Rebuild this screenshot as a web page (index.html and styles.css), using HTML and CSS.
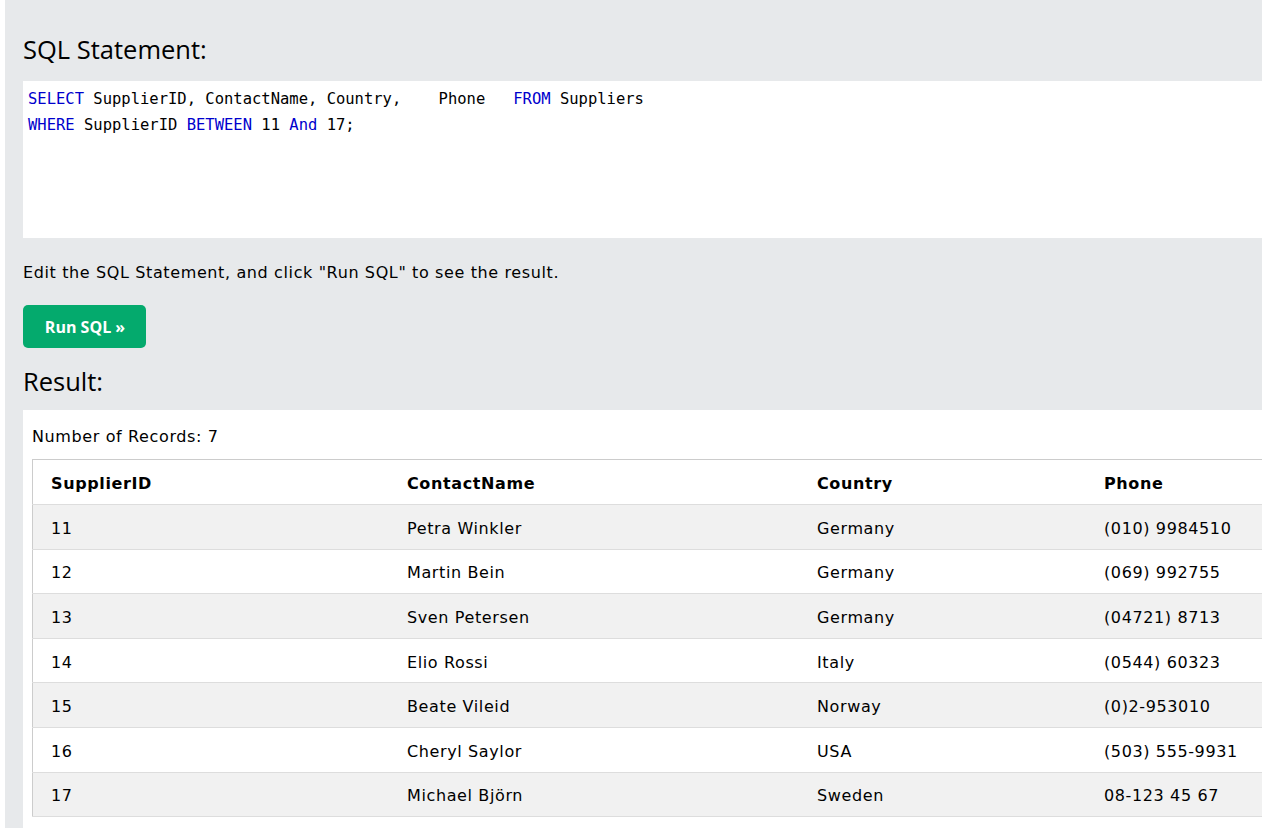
FILE: index.html
```html
<!DOCTYPE html>
<html>
<head>
<meta charset="utf-8">
<link rel="stylesheet" href="styles.css">
</head>
<body>
<div class="page">
  <h2 class="heading heading-sql">SQL Statement:</h2>
  <div class="code"><div class="code-line"><span class="kw">SELECT</span> SupplierID, ContactName, Country,    Phone   <span class="kw">FROM</span> Suppliers</div><div class="code-line"><span class="kw">WHERE</span> SupplierID <span class="kw">BETWEEN</span> 11 <span class="kw">And</span> 17;</div></div>
  <p class="hint">Edit the SQL Statement, and click "Run SQL" to see the result.</p>
  <button class="run-btn">Run SQL »</button>
  <h2 class="heading heading-result">Result:</h2>
  <div class="result">
    <div class="count">Number of Records: 7</div>
    <table class="grid">
      <thead>
        <tr><th class="c1">SupplierID</th><th class="c2">ContactName</th><th class="c3">Country</th><th class="c4">Phone</th></tr>
      </thead>
      <tbody>
        <tr><td>11</td><td>Petra Winkler</td><td>Germany</td><td>(010) 9984510</td></tr>
        <tr><td>12</td><td>Martin Bein</td><td>Germany</td><td>(069) 992755</td></tr>
        <tr><td>13</td><td>Sven Petersen</td><td>Germany</td><td>(04721) 8713</td></tr>
        <tr><td>14</td><td>Elio Rossi</td><td>Italy</td><td>(0544) 60323</td></tr>
        <tr><td>15</td><td>Beate Vileid</td><td>Norway</td><td>(0)2-953010</td></tr>
        <tr><td>16</td><td>Cheryl Saylor</td><td>USA</td><td>(503) 555-9931</td></tr>
        <tr><td>17</td><td>Michael Björn</td><td>Sweden</td><td>08-123 45 67</td></tr>
      </tbody>
    </table>
  </div>
</div>
</body>
</html>
```
FILE: styles.css
```css
html, body {
  margin: 0;
  padding: 0;
  background: #ffffff;
  overflow: hidden;
}
body {
  font-family: "DejaVu Sans", Verdana, sans-serif;
  font-size: 16px;
  letter-spacing: 0.62px;
  color: #000;
}
.page {
  margin-left: 5px;
  width: 1400px;
  background: #e7e9eb;
  padding: 31px 0 20px 18px;
  min-height: 900px;
}
.heading {
  font-family: "Open Sans", "Noto Sans", sans-serif;
  font-weight: 400;
  font-size: 25.5px;
  letter-spacing: 0;
  line-height: 36px;
  margin: 0;
  color: #000;
}
.heading-sql {
  margin-bottom: 14px;
}
.code {
  background: #fff;
  height: 157px;
  box-sizing: border-box;
  padding: 5px 5px;
  font-family: "DejaVu Sans Mono", "Liberation Mono", monospace;
  font-size: 15.5px;
  letter-spacing: 0;
  line-height: 26px;
  white-space: pre;
}
.kw { color: #0000cd; }
.hint {
  margin: 23px 0 20px;
  line-height: 24px;
}
.run-btn {
  display: block;
  width: 123px;
  height: 43px;
  border: none;
  border-radius: 5px;
  background: #04aa6d;
  color: #fff;
  font-family: "Open Sans", "Noto Sans", sans-serif;
  font-weight: 700;
  font-size: 16px;
  letter-spacing: 0;
  padding: 0 0 0 1px;
}
.heading-result {
  margin-top: 15px;
  margin-bottom: 11px;
}
.result {
  background: #fff;
  padding: 15px 0 20px 9px;
}
.count {
  line-height: 24px;
  margin-bottom: 10px;
}
.grid {
  border-collapse: collapse;
  border: 1px solid #ccc;
  width: 1380px;
}
.grid th, .grid td {
  text-align: left;
  padding: 3px 0 0 18px;
  height: 40.6px;
  border-bottom: 1px solid #ddd;
}
.grid th {
  font-weight: 700;
  padding-top: 2px;
  height: 42px;
}
.grid tbody tr:nth-child(odd) {
  background: #f1f1f1;
}
.grid .c1 { width: 338px; }
.grid .c2 { width: 392px; }
.grid .c3 { width: 269px; }
```
